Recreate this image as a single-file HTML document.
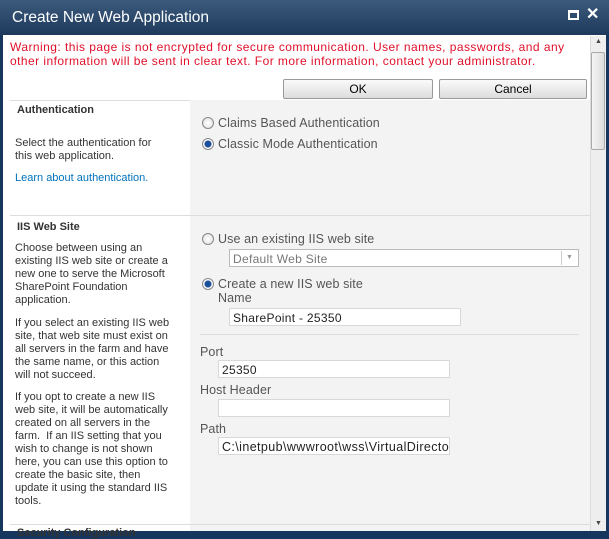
<!DOCTYPE html>
<html><head><style>
*{margin:0;padding:0;box-sizing:border-box}
body{width:609px;height:534px;overflow:hidden;background:#17365d;font-family:"Liberation Sans",Tahoma,sans-serif;position:relative}
.a{position:absolute;white-space:nowrap}
#title{left:0;top:0;width:609px;height:35px;background:linear-gradient(#3c5a7c,#1d3a5c)}
#body{left:3px;top:35px;width:603px;height:496px;background:#fff}
#panel{left:190px;top:100px;width:400px;height:431px;background:#f3f3f3}
.lt{font-size:11px;color:#333;line-height:13px}
.rt{font-size:12.5px;color:#555;letter-spacing:0.1px}
.inp{background:#fff;border:1px solid #d8d8d8;font-size:12px;color:#222;padding:2px 3px;height:18px;letter-spacing:0.3px}
.rad{width:12px;height:12px;border-radius:50%;border:1px solid #888;background:radial-gradient(#fff,#ddd)}
.on{background:radial-gradient(#1a4f9a 0 3px,#fff 4px)}
.btn{height:20px;border:1px solid #999;border-radius:2px;background:linear-gradient(#fafafa,#ddd);font-size:12px;text-align:center;line-height:18px;color:#000}
.sep{height:1px;background:#ddd}
</style></head><body>
<div class="a" id="title"></div>
<div class="a" style="left:12px;top:9px;font-size:15.5px;color:#fff">Create New Web Application</div>
<div class="a" style="left:568px;top:10px;width:11px;height:10px;border:2px solid #fff;border-top-width:3px"></div>
<div class="a" style="left:586px;top:4px;font-size:16px;color:#fff;font-weight:bold">✕</div>
<div class="a" id="body"></div>
<div class="a" id="panel"></div>
<div class="a" style="left:590px;top:36px;width:16px;height:495px;background:#eee;border-left:1px solid #ddd"></div>
<div class="a" style="left:591px;top:52px;width:14px;height:98px;background:linear-gradient(90deg,#f4f4f4,#ddd);border:1px solid #aaa;border-radius:2px"></div>
<div class="a" style="left:595px;top:38px;font-size:7px;color:#444">▲</div>
<div class="a" style="left:595px;top:520px;font-size:7px;color:#444">▼</div>
<div class="a" style="left:10px;top:40px;font-size:12px;color:#e0102a;line-height:14px;letter-spacing:0.45px">Warning: this page is not encrypted for secure communication. User names, passwords, and any<br>other information will be sent in clear text. For more information, contact your administrator.</div>
<div class="a btn" style="left:283px;top:79px;width:150px">OK</div>
<div class="a btn" style="left:439px;top:79px;width:148px">Cancel</div>
<div class="a sep" style="left:10px;top:100px;width:180px"></div>
<div class="a" style="left:17px;top:104px;font-size:11px;font-weight:bold;color:#333">Authentication</div>
<div class="a lt" style="left:15px;top:137px">Select the authentication for<br>this web application.</div>
<div class="a lt" style="left:15px;top:172px;color:#0072bc">Learn about authentication.</div>
<div class="a rad" style="left:202px;top:117px"></div>
<div class="a rt" style="left:218px;top:116px">Claims Based Authentication</div>
<div class="a rad on" style="left:202px;top:138px"></div>
<div class="a rt" style="left:218px;top:137px">Classic Mode Authentication</div>
<div class="a sep" style="left:10px;top:215px;width:580px"></div>
<div class="a" style="left:17px;top:221px;font-size:11px;font-weight:bold;color:#333">IIS Web Site</div>
<div class="a lt" style="left:15px;top:242px">Choose between using an<br>existing IIS web site or create a<br>new one to serve the Microsoft<br>SharePoint Foundation<br>application.</div>
<div class="a lt" style="left:15px;top:317px">If you select an existing IIS web<br>site, that web site must exist on<br>all servers in the farm and have<br>the same name, or this action<br>will not succeed.</div>
<div class="a lt" style="left:15px;top:391px">If you opt to create a new IIS<br>web site, it will be automatically<br>created on all servers in the<br>farm.&nbsp; If an IIS setting that you<br>wish to change is not shown<br>here, you can use this option to<br>create the basic site, then<br>update it using the standard IIS<br>tools.</div>
<div class="a rad" style="left:202px;top:233px"></div>
<div class="a rt" style="left:218px;top:232px">Use an existing IIS web site</div>
<div class="a inp" style="left:229px;top:249px;width:350px;color:#777;border-color:#bbb">Default Web Site</div>
<div class="a" style="left:561px;top:251px;width:16px;height:14px;border-left:1px solid #ccc;font-size:7px;color:#999;text-align:center;line-height:14px">▼</div>
<div class="a rad on" style="left:202px;top:278px"></div>
<div class="a rt" style="left:218px;top:277px">Create a new IIS web site</div>
<div class="a rt" style="left:218px;top:291px">Name</div>
<div class="a inp" style="left:229px;top:308px;width:232px">SharePoint - 25350</div>
<div class="a sep" style="left:200px;top:334px;width:379px"></div>
<div class="a rt" style="left:200px;top:345px">Port</div>
<div class="a inp" style="left:218px;top:360px;width:232px">25350</div>
<div class="a rt" style="left:200px;top:383px">Host Header</div>
<div class="a inp" style="left:218px;top:399px;width:232px"></div>
<div class="a rt" style="left:200px;top:422px">Path</div>
<div class="a inp" style="left:218px;top:437px;width:232px;overflow:hidden;font-size:12.5px;letter-spacing:0.4px">C:\inetpub\wwwroot\wss\VirtualDirectories</div>
<div class="a sep" style="left:10px;top:524px;width:580px"></div>
<div class="a" style="left:17px;top:527px;font-size:11px;font-weight:bold;color:#333">Security Configuration</div>
</body></html>
